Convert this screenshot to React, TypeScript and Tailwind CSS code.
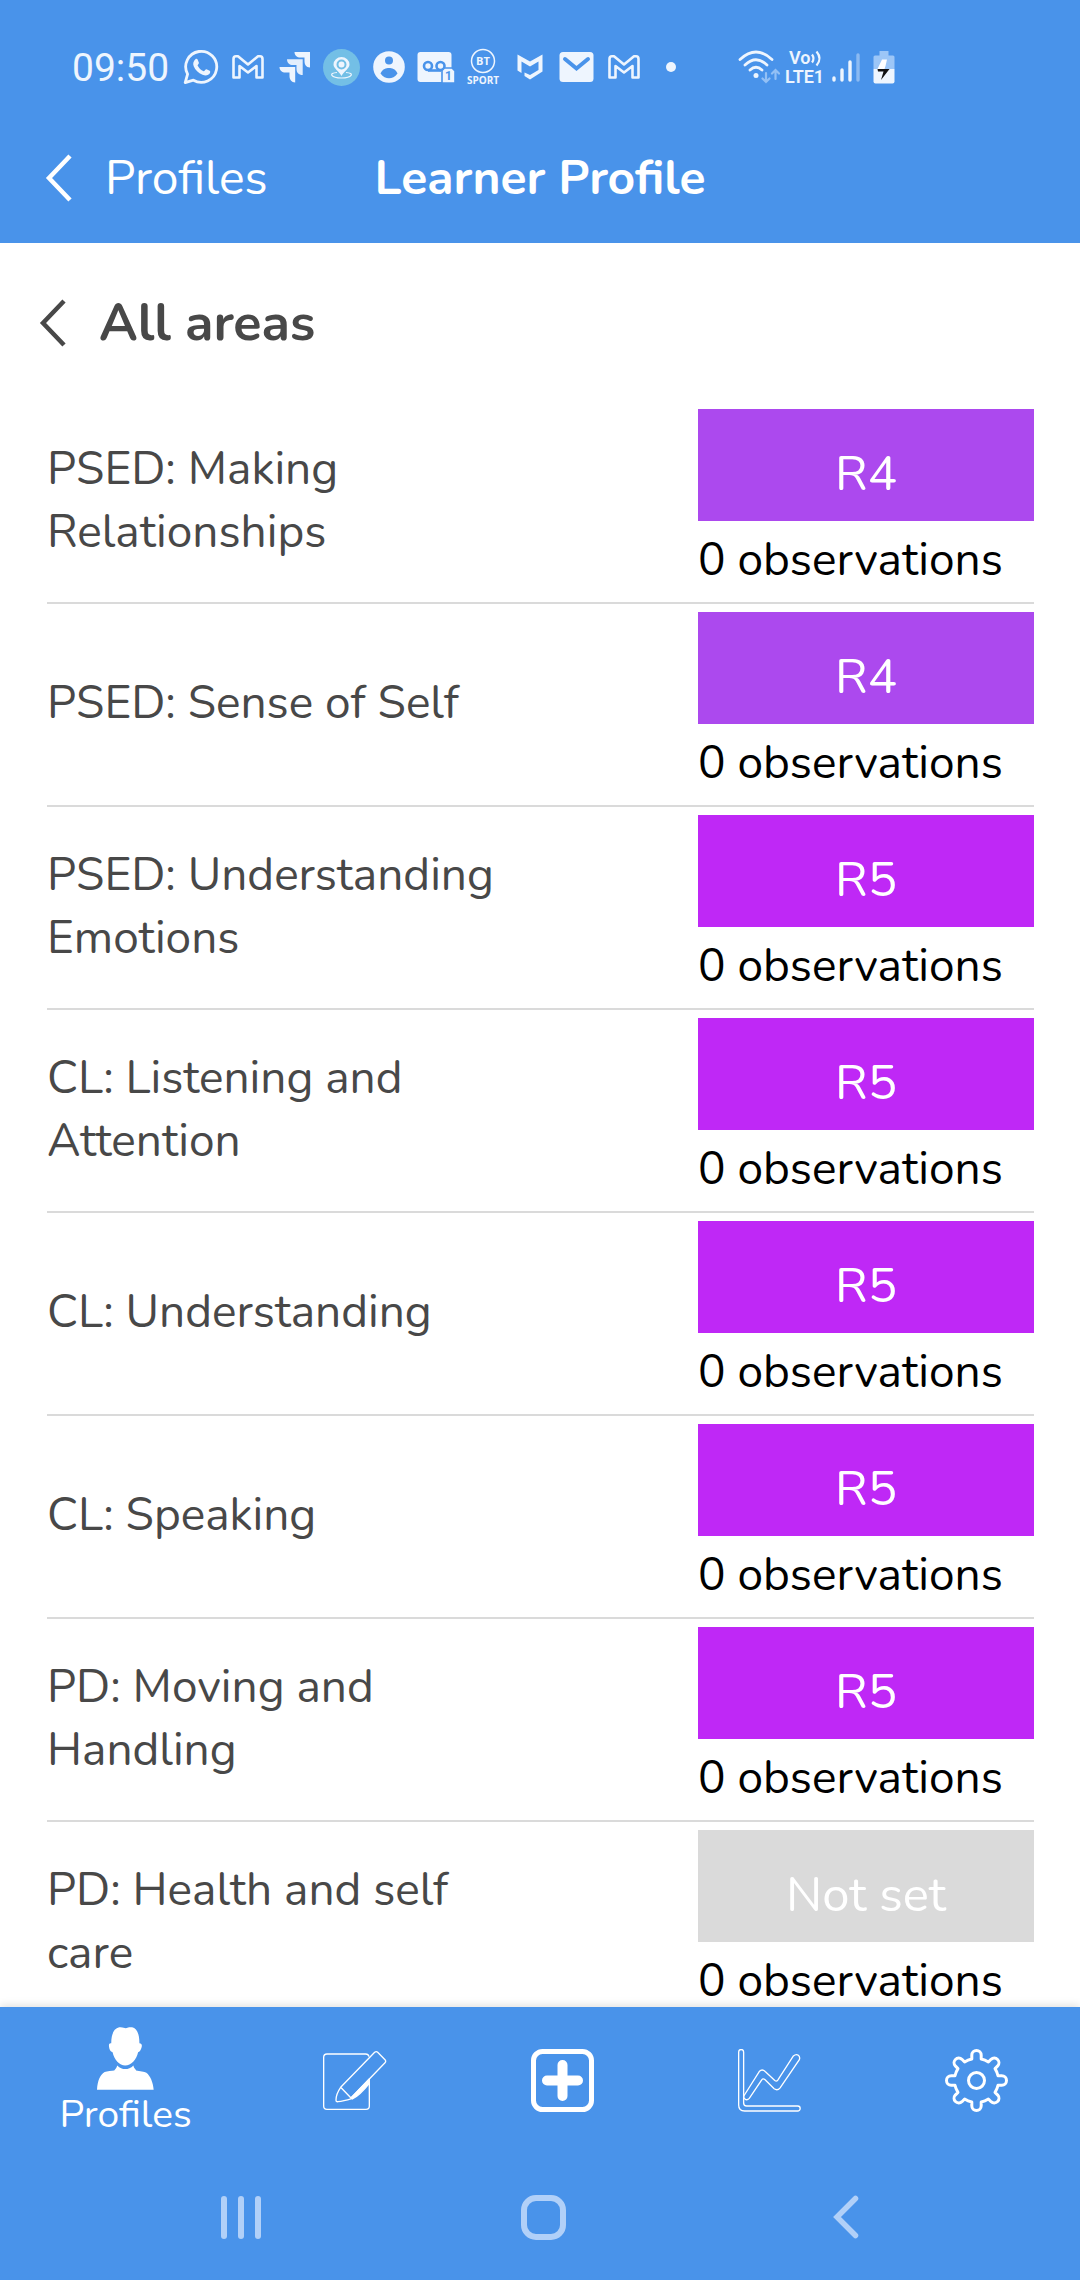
import type { ReactNode } from "react";

interface Area {
  name: string;
  level: string;
  color: string;
}

const AREAS: Area[] = [
  { name: "PSED: Making Relationships", level: "R4", color: "bg-[#ac49ee]" },
  { name: "PSED: Sense of Self", level: "R4", color: "bg-[#ac49ee]" },
  { name: "PSED: Understanding Emotions", level: "R5", color: "bg-[#bf28f6]" },
  { name: "CL: Listening and Attention", level: "R5", color: "bg-[#bf28f6]" },
  { name: "CL: Understanding", level: "R5", color: "bg-[#bf28f6]" },
  { name: "CL: Speaking", level: "R5", color: "bg-[#bf28f6]" },
  { name: "PD: Moving and Handling", level: "R5", color: "bg-[#bf28f6]" },
  { name: "PD: Health and self care", level: "Not set", color: "bg-[#dadada]" },
];

// outline of an eight-toothed cog centred on 0,0
function cogPath() {
  const parts: string[] = [];
  for (let i = 0; i < 8; i++) {
    const a = (i * Math.PI) / 4;
    const at = (x: number, y: number) =>
      `${(x * Math.cos(a) - y * Math.sin(a)).toFixed(2)} ${(x * Math.sin(a) + y * Math.cos(a)).toFixed(2)}`;
    parts.push(`${i === 0 ? "M" : "A22 22 0 0 1 "}${at(-4.7, -21.5)}`);
    parts.push(`L${at(-4.7, -25.3)}A4.7 4.7 0 0 1 ${at(4.7, -25.3)}L${at(4.7, -21.5)}`);
  }
  return `${parts.join("")}A22 22 0 0 1 -4.7 -21.5Z`;
}

function Chevron() {
  return (
    <svg width="28" height="48" viewBox="0 0 28 48" fill="none" stroke="currentColor" strokeWidth="4.500">
      <path d="M25 2 4 24 25 46" />
    </svg>
  );
}

function GmailIcon() {
  return (
    <svg width="32" height="24" viewBox="0 0 32 24" fill="none" stroke="currentColor" strokeWidth="2.6" strokeLinejoin="round">
      <path d="M1.500 4Q1.500 1.300 4 1.300H6L16 9.500 26 1.300h2Q30.500 1.300 30.500 4V22.500H24.500V11L16 17.500 7.500 11V22.500H1.500Z" />
    </svg>
  );
}

function StatusSlot({ children }: { children: ReactNode }) {
  return <span className="flex w-[47px] shrink-0 items-center justify-center">{children}</span>;
}

function StatusBar() {
  return (
    <div className="flex h-[134px] items-center pl-[72px] text-[#eef5fe]">
      <span className="w-[105px] pt-[2px] font-[Roboto] text-[39px] leading-[48px]">09:50</span>
      <StatusSlot>
        <svg width="36" height="36" viewBox="0 0 36 36" fill="none">
          <path d="M2.200 33.600 4.600 25.200A15.500 15.500 0 1 1 10.400 31.200Z" stroke="currentColor" strokeWidth="2.800" strokeLinejoin="round" />
          <path d="M12.400 10.200c.8-.7 1.800-.5 2.200.4l1.300 3.200c.3.8-1.500 2.300-1.300 2.800 1.300 2.700 3.300 4.500 6 5.600.8.300 2-2.400 2.900-2l3.200 1.600c.9.500.5 2.400-.4 3.300-1.700 1.600-4.200 1.700-6.800.6-4.200-1.700-7.200-4.700-8.800-8.400-1.100-2.800-.3-5.400 1.700-7.100Z" fill="currentColor" />
        </svg>
      </StatusSlot>
      <StatusSlot>
        <GmailIcon />
      </StatusSlot>
      <StatusSlot>
        <svg width="32" height="32" viewBox="0 0 32 32" fill="currentColor">
          <path d="M15.500 1H31V16.500C27 16.500 25.500 13.500 25.500 10V6.500H21.500C18 6.500 15.500 4.500 15.500 1Z" />
          <path d="M8 8.200H23.700V24C19.500 24 17.500 21.500 17.500 18V14H14C10.500 14 8 12 8 8.200Z" opacity=".93" />
          <path d="M.5 16H16.200V31.500C12.500 31.500 10.500 28.500 10.500 25V21.500H6.500C3 21.500.5 19.500.5 16Z" />
        </svg>
      </StatusSlot>
      <StatusSlot>
        <svg width="37" height="37" viewBox="0 0 37 37" fill="none">
          <circle cx="18.500" cy="18.500" r="18.500" fill="#73bfe6" />
          <path d="M14 23.500C5 24 8 29 18.500 29S32 24 23 23.500" stroke="currentColor" strokeWidth="1.200" />
          <path d="M18.500 27C16 22 10.500 19.500 10.500 15.500a8 7.500 0 0 1 16 0C26.500 19.500 21 22 18.500 27Z" fill="currentColor" />
          <circle cx="18.500" cy="15.500" r="4" fill="currentColor" stroke="#73bfe6" strokeWidth="2" />
        </svg>
      </StatusSlot>
      <StatusSlot>
        <svg width="32" height="32" viewBox="0 0 32 32">
          <circle cx="16" cy="16" r="15.800" fill="currentColor" />
          <circle cx="16" cy="9.500" r="4" fill="#4993ea" />
          <path d="M7.500 22.500C10 17.500 13 17 16 17s6 .5 8.500 5.500C22 26 19 27.300 16 27.300S10 26 7.500 22.500Z" fill="#4993ea" />
        </svg>
      </StatusSlot>
      <StatusSlot>
        <svg width="38" height="32" viewBox="0 0 38 32">
          <rect x=".5" y="1" width="34" height="30" rx="3" fill="currentColor" />
          <g fill="none" stroke="#4993ea" strokeWidth="2.600">
            <circle cx="11" cy="15" r="4" />
            <circle cx="23.500" cy="15" r="4" />
            <path d="M11 19.500H24" />
          </g>
          <path d="M27.500 17H35L38 20V32H25V19.500Z" fill="currentColor" stroke="#4993ea" strokeWidth="1.600" />
          <text x="31.500" y="29" textAnchor="middle" fontFamily="Roboto" fontWeight="700" fontSize="12" fill="#4993ea">1</text>
        </svg>
      </StatusSlot>
      <StatusSlot>
        <svg width="36" height="42" viewBox="0 -2 36 42" fill="currentColor" fontFamily="Open Sans" fontWeight="700">
          <circle cx="18" cy="13" r="11.500" fill="none" stroke="currentColor" strokeWidth="1.500" />
          <text x="18" y="17" textAnchor="middle" fontSize="11">BT</text>
          <text x="18" y="36" textAnchor="middle" fontSize="10">SPORT</text>
        </svg>
      </StatusSlot>
      <StatusSlot>
        <svg width="28" height="28" viewBox="0 0 28 28" fill="currentColor">
          <path d="M1.500 1.500 14 8.500 26.500 1.500V18.500L14 26.500 8.500 23V19.500L14 22 22.500 17V8.500L14 13.500 5.500 8.500V20L1.500 17.500Z" />
        </svg>
      </StatusSlot>
      <StatusSlot>
        <svg width="35" height="32" viewBox="0 0 35 32">
          <rect x=".5" y="1" width="34" height="30" rx="3.500" fill="currentColor" />
          <path d="M6 8 17.500 17.500 29 8" fill="none" stroke="#4993ea" strokeWidth="4" strokeLinecap="round" />
        </svg>
      </StatusSlot>
      <StatusSlot>
        <GmailIcon />
      </StatusSlot>
      <StatusSlot>
        <span className="size-[10px] rounded-full bg-current" />
      </StatusSlot>
      <div className="ml-[44px] flex items-center gap-[5px]">
        <svg width="42" height="34" viewBox="0 0 42 34" fill="none" stroke="currentColor" strokeWidth="2.800" strokeLinecap="round">
          <path d="M2 9.500Q18 -5.500 34 9.500M7 15Q18 4.500 29 15M12 20Q18 14.500 24 20" />
          <circle cx="18" cy="25.500" r="2.500" fill="currentColor" stroke="none" />
          <g stroke="#93c0f5" strokeWidth="2.200">
            <path d="M28 23V32M24.500 28.500 28 32 31.500 28.500M37.500 29V20M34 23.500 37.500 20 41 23.500" />
          </g>
        </svg>
        <svg width="42" height="46" viewBox="0 -5 42 46" fill="currentColor" fontFamily="Roboto" fontWeight="600">
          <text x="4" y="15" fontSize="18">Vo</text>
          <path d="M27 5.500Q30 9.500 27 13.500M31.500 2.500Q37.500 9.500 31.500 16.500" fill="none" stroke="currentColor" strokeWidth="2.200" />
          <text x="0" y="34" fontSize="18">LTE1</text>
        </svg>
        <svg width="28" height="32" viewBox="0 0 28 32" stroke="currentColor" strokeWidth="3.400" strokeLinecap="round">
          <path d="M2 27V29M10 19V29M18 11V29" />
          <path d="M26 4V29" opacity=".4" />
        </svg>
        <svg className="ml-2" width="22" height="34" viewBox="0 0 22 34">
          <path d="M6.500 1H15.500V5.500H20a1.500 1.500 0 0 1 1.500 1.500V19H.5V7A1.500 1.500 0 0 1 2 5.500H6.500Z" fill="#9cc6f7" />
          <path d="M.5 19H21.500V31.500a2 2 0 0 1-2 2H2.500a2 2 0 0 1-2-2Z" fill="currentColor" />
          <path d="M9 9.500H14L12.500 16 11.500 19H4.500Z" fill="#fff" />
          <path d="M4.500 19H16.500L8 30 10.500 21.500H5Z" fill="#111" />
        </svg>
      </div>
    </div>
  );
}

function AreaRow({ area }: { area: Area }) {
  return (
    <li className="flex items-center justify-between border-b-2 border-[#dadada] pt-2">
      <span className="w-[480px] pb-3 text-[46px] leading-[63px] text-[#484848]">{area.name}</span>
      <div className="h-[193px] w-[336px] shrink-0">
        <button className={`block h-[112px] w-full pt-4 text-[49px] leading-none text-white ${area.color}`}>
          {area.level}
        </button>
        <p className="pt-[7px] text-[46px] leading-[63px] whitespace-nowrap text-black">0 observations</p>
      </div>
    </li>
  );
}

function TabBar() {
  return (
    <nav className="grid h-[147px] grid-cols-[251fr_207fr_207fr_207fr_207fr] items-center" aria-label="Sections">
      <button className="flex flex-col items-center pt-1">
        <svg width="59" height="65" viewBox="288 80 178 196" fill="currentColor">
          <path d="M334 132C334 100 345 84 362 84 370 84 374 87 378 87 384 84 392 84 397 84 412 88 419 104 419 132 426 132 428 138 425 146 423 153 419 158 415 159 410 182 394 199 376 199 359 199 343 182 338 159 330 157 327 146 327 138 327 133 330 131 334 132Z" />
          <path d="M291 272C293 245 300 228 314 219 322 215 336 215 343 214 346 210 350 208 352 199 360 207 368 210 376 210 385 210 393 207 401 199 402 208 408 209 409 214 420 216 434 217 440 221 452 230 460 250 462 272Z" />
        </svg>
        <span className="text-[39px] leading-[48px]">Profiles</span>
      </button>
      <button className="flex justify-center" aria-label="Observations">
        <svg width="65" height="61" viewBox="969 150 195 183" fill="none" stroke="currentColor" strokeWidth="4" strokeLinejoin="round">
          <path d="M1111 245V318a10 10 0 0 1-10 10H984a10 10 0 0 1-10-10V172a10 10 0 0 1 10-10H1100q8 0 10 8" />
          <path d="M1025 262 1127 157q5-4 9 0l22 22q4 5 0 9L1056 294Z" />
          <path d="M1025 262C1016 275 1011 290 1011 300q0 6 6 5C1030 304 1045 300 1058 296" />
          <path d="M1056 294 1111 237V250C1095 270 1075 290 1060 297Z" fill="currentColor" />
        </svg>
      </button>
      <button className="flex justify-center" aria-label="Add">
        <svg width="63" height="63" viewBox="0 0 63 63" fill="none" stroke="currentColor">
          <rect x="2.500" y="2.500" width="58" height="58" rx="9" strokeWidth="5" />
          <path d="M31.500 16V47M16 31.500H47" strokeWidth="10" strokeLinecap="round" />
        </svg>
      </button>
      <button className="flex justify-center" aria-label="Charts">
        <svg width="63" height="63" viewBox="54 147 190 190" fill="none" stroke="currentColor" strokeWidth="4">
          <path d="M56 156a7.500 7.500 0 0 1 15 0V310q0 9 9 9H234a7.500 7.500 0 0 1 0 15H74q-18 0-18-18Z" />
          <path d="M72 288 118 215q9-9 18 0L165 242q5 4 9-1L221 168q8-7 15-2 6 5 3 13L181 264q-8 10-18 3L135 239q-6-5-10 2L88 296q-7 7-13 2-6-4-3-10Z" />
        </svg>
      </button>
      <button className="flex justify-center" aria-label="Settings">
        <svg width="63" height="63" viewBox="-31.5 -31.5 63 63" fill="none" stroke="currentColor" strokeWidth="3">
          <path d={cogPath()} strokeLinejoin="round" />
          <circle r="8" />
        </svg>
      </button>
    </nav>
  );
}

function SystemNav() {
  return (
    <div className="grid h-[126px] grid-cols-3 items-center pr-[84px] pl-[90px] text-[#b1d0f8]">
      <button className="flex justify-center gap-[11px]" aria-label="Recent apps">
        <span className="h-[43px] w-[6px] rounded-full bg-current" />
        <span className="h-[43px] w-[6px] rounded-full bg-current" />
        <span className="h-[43px] w-[6px] rounded-full bg-current" />
      </button>
      <button className="flex justify-center" aria-label="Home">
        <span className="size-[45px] rounded-[15px] border-[6px] border-current" />
      </button>
      <button className="flex justify-center" aria-label="Back">
        <svg width="27" height="44" viewBox="0 0 27 44" fill="none" stroke="currentColor" strokeWidth="5.500" strokeLinecap="round">
          <path d="M23.500 3.500 5 22 23.500 40.500" />
        </svg>
      </button>
    </div>
  );
}

export default function App() {
  return (
    <div className="flex h-screen flex-col bg-white font-[Nunito,Lato,sans-serif]">
      <header className="bg-[#4993ea] pb-[21px] text-white">
        <StatusBar />
        <div className="grid h-[88px] grid-cols-[1fr_auto_1fr] items-center">
          <button className="flex items-center gap-8 pl-[45px] text-[48px] leading-[60px]">
            <Chevron />
            Profiles
          </button>
          <h1 className="text-[48px] leading-[60px] font-bold">Learner Profile</h1>
        </div>
      </header>

      <main className="min-h-0 flex-1 overflow-hidden">
        <button className="flex h-[158px] items-center gap-8 pt-[2px] pl-[39px] text-[52px] leading-[60px] font-bold text-[#484848]">
          <Chevron />
          All areas
        </button>
        <ul className="mr-[46px] ml-[47px]">
          {AREAS.map((area) => (
            <AreaRow key={area.name} area={area} />
          ))}
        </ul>
      </main>

      <footer className="relative bg-[#4993ea] text-white shadow-[0_-2px_8px_rgba(0,0,0,0.12)]">
        <TabBar />
        <SystemNav />
      </footer>
    </div>
  );
}
